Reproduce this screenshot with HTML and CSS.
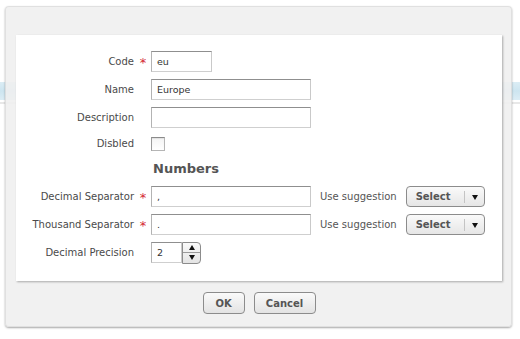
FILE: index.html
```html
<!DOCTYPE html>
<html>
<head>
<meta charset="utf-8">
<link rel="stylesheet" href="styles.css">
</head>
<body>
<div class="dialog">
  <div class="panel">
    <div class="form">
      <label class="lbl">Code</label><span class="req">*</span>
      <div class="ctl"><div class="input w-code">eu</div></div>

      <label class="lbl">Name</label><span class="req"></span>
      <div class="ctl"><div class="input w-long">Europe</div></div>

      <label class="lbl">Description</label><span class="req"></span>
      <div class="ctl"><div class="input w-long"></div></div>

      <label class="lbl">Disbled</label><span class="req"></span>
      <div class="ctl ctl-check"><span class="checkbox"></span></div>

      <div class="section">Numbers</div>

      <label class="lbl">Decimal Separator</label><span class="req">*</span>
      <div class="ctl"><div class="input w-long">,</div></div>
      <span class="hint">Use suggestion</span>
      <div class="split"><span class="split-main">Select</span><span class="split-arrow"></span></div>

      <label class="lbl">Thousand Separator</label><span class="req">*</span>
      <div class="ctl"><div class="input w-long">.</div></div>
      <span class="hint">Use suggestion</span>
      <div class="split"><span class="split-main">Select</span><span class="split-arrow"></span></div>

      <label class="lbl">Decimal Precision</label><span class="req"></span>
      <div class="ctl">
        <div class="spinner">
          <div class="input w-num">2</div>
          <div class="spin-btns">
            <span class="spin-up"></span>
            <span class="spin-down"></span>
          </div>
        </div>
      </div>
    </div>
  </div>
  <div class="actions">
    <button class="btn btn-ok">OK</button>
    <button class="btn btn-cancel">Cancel</button>
  </div>
</div>
</body>
</html>
```

FILE: styles.css
```css
html, body {
  margin: 0;
  padding: 0;
}
body {
  width: 520px;
  height: 339px;
  overflow: hidden;
  font-family: "DejaVu Sans", Verdana, sans-serif;
  font-size: 10px;
  color: #4a4a4a;
  background:
    linear-gradient(to bottom,
      #ffffff 0, #ffffff 82px,
      #dbedf5 82px, #cde5f0 91px, #dcedf5 100px,
      #ffffff 100px, #ffffff 102px,
      #e8e8e8 102px, #e8e8e8 104px,
      #ffffff 104px, #ffffff 100%);
}
.dialog {
  box-sizing: border-box;
  margin: 6px 0 0 5px;
  width: 507px;
  height: 321px;
  background: rgba(239, 239, 239, 0.88);
  border: 1px solid rgba(0, 0, 0, 0.07);
  border-radius: 4px;
  box-shadow: 0 1px 2px rgba(0, 0, 0, 0.35);
  padding: 28px 9px 0 10px;
  display: flex;
  flex-direction: column;
}
.panel {
  background: #fff;
  height: 246px;
  box-sizing: border-box;
  padding-top: 16px;
  box-shadow: 1px 1px 2px rgba(0, 0, 0, 0.3);
}
.form {
  display: grid;
  grid-template-columns: 118px 17px auto auto auto;
  grid-template-rows: 21px 21px 21px 16px 21px 21px 21px 21px;
  justify-content: start;
  row-gap: 7px;
  align-items: center;
}
.lbl {
  grid-column: 1;
  text-align: right;
  color: #4a4a4a;
  white-space: nowrap;
}
.req {
  grid-column: 2;
  text-align: center;
  color: #d42a33;
  font-size: 13px;
  font-weight: normal;
  line-height: 10px;
  padding-left: 1px;
  padding-top: 3px;
}
.ctl {
  grid-column: 3;
  display: flex;
  align-items: center;
}
.ctl-check {
  align-self: end;
}
.input {
  box-sizing: border-box;
  height: 21px;
  border: 1px solid;
  border-color: #8f8f8f #c9c9c9 #cfcfcf #b3b3b3;
  background: #fff;
  color: #333;
  font-size: 9.5px;
  line-height: 19px;
  padding: 0 5px;
}
.w-code { width: 61px; }
.w-long { width: 160px; }
.w-num { width: 31px; }
.checkbox {
  box-sizing: border-box;
  width: 14px;
  height: 14px;
  border: 1px solid;
  border-color: #8a8a8a #b5b5b5 #b5b5b5 #9a9a9a;
  background: linear-gradient(#f4f4f4, #ffffff);
  box-shadow: inset 0 1px 1px rgba(0,0,0,0.08);
}
.section {
  grid-column: 3 / span 3;
  font-weight: bold;
  font-size: 13px;
  color: #555;
  padding-left: 2px;
}
.hint {
  grid-column: 4;
  padding-left: 9px;
  color: #555;
  white-space: nowrap;
}
.split {
  grid-column: 5;
  margin-left: 9px;
  box-sizing: border-box;
  width: 79px;
  height: 21px;
  border: 1px solid #8c8c8c;
  border-radius: 4px;
  background: linear-gradient(#fafafa, #e6e6e6);
  display: flex;
  align-items: center;
}
.split-main {
  flex: 1;
  font-weight: bold;
  color: #555;
  padding-left: 9px;
  height: 12px;
  line-height: 12px;
  border-right: 1px solid #c4c4c4;
}
.split-arrow {
  width: 0;
  height: 0;
  margin: 1px 6px 0 7px;
  border-left: 3.5px solid transparent;
  border-right: 3.5px solid transparent;
  border-top: 5px solid #111;
}
.spinner {
  display: flex;
}
.spin-btns {
  box-sizing: border-box;
  width: 19px;
  height: 22px;
  border: 1px solid #8c8c8c;
  border-radius: 0 4px 4px 0;
  background: linear-gradient(#fafafa, #e4e4e4);
  display: flex;
  flex-direction: column;
}
.spin-up, .spin-down {
  flex: 1;
  display: flex;
  align-items: center;
  justify-content: center;
}
.spin-up {
  border-bottom: 1px solid #9a9a9a;
}
.spin-up::before {
  content: "";
  border-left: 3.5px solid transparent;
  border-right: 3.5px solid transparent;
  border-bottom: 5px solid #111;
}
.spin-down::before {
  content: "";
  border-left: 3.5px solid transparent;
  border-right: 3.5px solid transparent;
  border-top: 5px solid #111;
}
.actions {
  display: flex;
  justify-content: center;
  gap: 9px;
  margin-top: 11px;
}
.btn {
  box-sizing: border-box;
  height: 22px;
  border: 1px solid #8c8c8c;
  border-radius: 4px;
  background: linear-gradient(#fafafa, #e3e3e3);
  font-family: "DejaVu Sans", Verdana, sans-serif;
  font-size: 10px;
  font-weight: bold;
  color: #555;
  padding: 0;
}
.btn-ok { width: 42px; }
.btn-cancel { width: 62px; }
```
